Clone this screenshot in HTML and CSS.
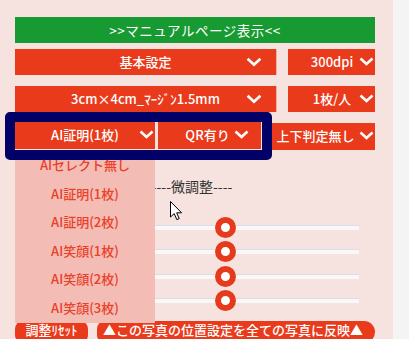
FILE: index.html
```html
<!DOCTYPE html>
<html lang="ja">
<head>
    <meta charset="UTF-8">
    <meta name="viewport" content="width=device-width, initial-scale=1.0">
    <title>写真設定</title>
    <link rel="stylesheet" href="styles.css">
</head>
<body>
    <div class="page">
        <div class="panel">
            <div class="manual">&gt;&gt;マニュアルページ表示&lt;&lt;</div>

            <div class="row">
                <div class="sel sel-wide">基本設定<svg class="chev chev-wide" viewBox="0 0 15 9"><path d="M1.5 1.5 L7.5 7 L13.5 1.5"/></svg></div>
                <div class="sel sel-small">300dpi<svg class="chev chev-edge" viewBox="0 0 15 9"><path d="M1.5 1.5 L7.5 7 L13.5 1.5"/></svg></div>
            </div>

            <div class="row">
                <div class="sel sel-wide">3cm×4cm_ﾏｰｼﾞﾝ1.5mm<svg class="chev chev-wide" viewBox="0 0 15 9"><path d="M1.5 1.5 L7.5 7 L13.5 1.5"/></svg></div>
                <div class="sel sel-small">1枚/人<svg class="chev chev-edge" viewBox="0 0 15 9"><path d="M1.5 1.5 L7.5 7 L13.5 1.5"/></svg></div>
            </div>

            <div class="row row-ai">
                <div class="hl">
                    <div class="sel sel-ai">AI証明(1枚)<svg class="chev chev-edge" viewBox="0 0 15 9"><path d="M1.5 1.5 L7.5 7 L13.5 1.5"/></svg></div>
                    <div class="sel sel-qr">QR有り<svg class="chev chev-qr" viewBox="0 0 15 9"><path d="M1.5 1.5 L7.5 7 L13.5 1.5"/></svg></div>
                </div>
                <div class="sel sel-ud">上下判定無し<svg class="chev chev-edge" viewBox="0 0 15 9"><path d="M1.5 1.5 L7.5 7 L13.5 1.5"/></svg></div>
            </div>

            <ul class="ai-list">
                <li>AIセレクト無し</li>
                <li>AI証明(1枚)</li>
                <li>AI証明(2枚)</li>
                <li>AI笑顔(1枚)</li>
                <li>AI笑顔(2枚)</li>
                <li>AI笑顔(3枚)</li>
            </ul>

            <div class="adjust">
                <div class="adjust-title">----微調整----</div>
                <div class="slider"><span class="thumb" style="left: 59%"></span></div>
                <div class="slider"><span class="thumb" style="left: 59%"></span></div>
                <div class="slider"><span class="thumb" style="left: 59%"></span></div>
                <div class="slider"><span class="thumb" style="left: 59%"></span></div>
            </div>

            <div class="buttons">
                <div class="btn btn-reset">調整ﾘｾｯﾄ</div>
                <div class="btn btn-apply">▲この写真の位置設定を全ての写真に反映▲</div>
            </div>

            <svg class="cursor" width="13" height="20" viewBox="0 0 13 20"><path d="M0.5 0.5 L0.5 16 L4.2 12.6 L6.8 18.6 L9.2 17.6 L6.7 11.8 L11.6 11.8 Z" fill="#fff" stroke="#000" stroke-width="1"/></svg>
        </div>
        <div class="strip"></div>
    </div>
</body>
</html>
```

FILE: styles.css
```css
body {
    margin: 0;
    background-color: #f4f4f4;
    font-family: "Noto Sans CJK JP", "Noto Sans", sans-serif;
    font-size: 13px;
}
.page {
    display: flex;
    height: 339px;
    overflow: hidden;
}
.panel {
    position: relative;
    width: 360px;
    padding: 17px 18px 0 15px;
    background-color: #f6e3e0;
}
.strip {
    flex: 1;
    background-color: #f4f4f4;
}
.manual {
    height: 26px;
    line-height: 26px;
    background-color: #189a32;
    color: white;
    font-size: 13.5px;
    text-align: center;
    letter-spacing: 0.5px;
    margin-bottom: 6px;
}
.row {
    display: flex;
    align-items: flex-start;
    margin-bottom: 11px;
}
.sel {
    position: relative;
    box-sizing: border-box;
    height: 26px;
    line-height: 26px;
    background-color: #ea3a1c;
    color: white;
    font-weight: 500;
    text-align: center;
    white-space: nowrap;
}
.sel-wide {
    width: 262px;
    border-right: 1px solid #f2aea4;
    margin-right: 11px;
}
.sel-small {
    width: 87px;
    padding-left: 1px;
}
.chev {
    position: absolute;
    top: 8px;
    width: 15px;
    height: 9px;
    fill: none;
    stroke: white;
    stroke-width: 2.6;
}
.chev-wide {
    right: 14px;
    width: 16px;
    height: 10px;
}
.chev-edge {
    right: 1px;
}
.chev-qr {
    right: 12px;
}
.row-ai .sel {
    height: 27px;
}
.hl {
    position: relative;
    z-index: 2;
    display: flex;
    gap: 3px;
    margin: -11px 0 -11px -10px;
    padding: 0 1px 1px 0;
    border: 10px solid #000066;
    border-radius: 5px;
    background-color: #f6e3e0;
}
.sel-ai {
    width: 140px;
}
.sel-qr {
    width: 103px;
    padding-right: 4px;
}
.sel-ud {
    width: 103px;
    padding-right: 16px;
}
.ai-list {
    position: absolute;
    z-index: 1;
    left: 15px;
    top: 151px;
    width: 140px;
    margin: 0;
    padding: 0;
    list-style: none;
    background-color: #f3bcb4;
}
.ai-list li {
    height: 28.6px;
    line-height: 28.6px;
    text-align: center;
    color: #e9412a;
    font-weight: 500;
}
.adjust {
    margin-top: 26px;
}
.adjust-title {
    height: 20px;
    line-height: 20px;
    font-size: 14px;
    color: #333;
    text-align: center;
    padding-right: 6px;
    margin-bottom: 28.5px;
}
.slider {
    position: relative;
    box-sizing: border-box;
    width: 328px;
    height: 5px;
    margin: 0 0 19.5px 16px;
    background-color: #fbf7f6;
    border-top: 1px solid #d9dce6;
}
.thumb {
    position: absolute;
    top: -9px;
    left: 50%;
    box-sizing: border-box;
    width: 21px;
    height: 21px;
    margin-left: -10px;
    border: 6px solid #e63a1d;
    border-radius: 50%;
    background-color: white;
}
.buttons {
    display: flex;
    gap: 9px;
    margin-top: -1.5px;
}
.btn {
    height: 22px;
    line-height: 17px;
    background-color: #ea3a1c;
    color: white;
    font-weight: 500;
    white-space: nowrap;
}
.btn-reset {
    width: 73px;
    text-align: center;
    border-radius: 8px;
}
.btn-apply {
    width: 272px;
    padding-left: 6px;
    border-radius: 8px 11px 11px 8px;
}
.cursor {
    position: absolute;
    left: 170px;
    top: 201px;
}
```
